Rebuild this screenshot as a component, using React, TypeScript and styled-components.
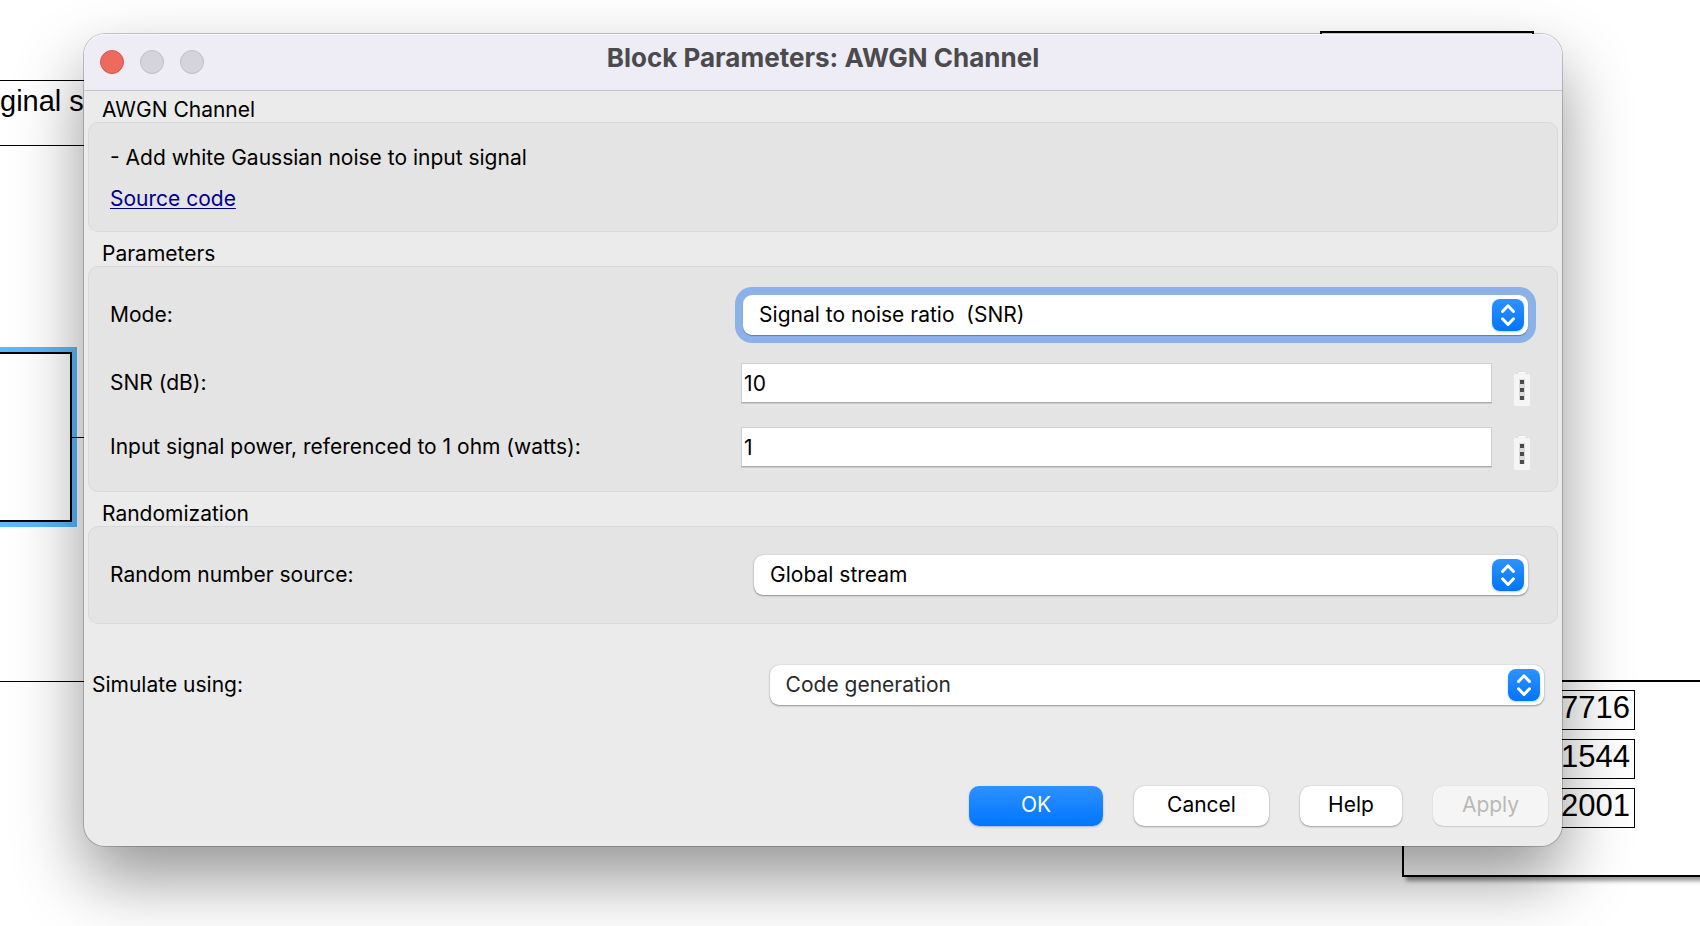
import React, { useState } from "react";
import styled, { createGlobalStyle, css } from "styled-components";

const GlobalStyle = createGlobalStyle`
  * { box-sizing: border-box; }
  body {
    margin: 0;
    background: #fff;
    color: #000;
    font-family: Inter, "Liberation Sans", sans-serif;
    font-size: 21px;
    line-height: 24px;
  }
  button, input, select { font: inherit; color: inherit; }
`;

const Page = styled.main`
  position: relative;
  min-height: 100vh;
  padding: 34px 138px 80px 84px;
  overflow: hidden;
`;

/* Block diagram behind the dialog */
const Canvas = styled.div`
  position: absolute;
  inset: 0;
  font-family: "Liberation Sans", sans-serif;
`;

const Wire = styled.div<{ $x?: number; $y: number; $length: number }>`
  position: absolute;
  left: ${(p) => p.$x ?? 0}px;
  top: ${(p) => p.$y}px;
  width: ${(p) => p.$length}px;
  height: 1px;
  background: #000;
`;

const SignalName = styled.div`
  position: absolute;
  left: 0;
  top: 84px;
  font-size: 29px;
  line-height: 34px;
  white-space: nowrap;
`;

const SelectedBlock = styled.div`
  position: absolute;
  left: -10px;
  top: 352px;
  width: 82px;
  height: 170px;
  border: 2px solid #000;
  background: #fff;
  box-shadow: 0 0 0 5px #5bb8fb;
`;

const HiddenBlock = styled.div`
  position: absolute;
  right: 166px;
  top: 31px;
  width: 214px;
  height: 80px;
  border: 2px solid #000;
`;

const DisplayBlock = styled.div`
  position: absolute;
  right: -10px;
  top: 680px;
  width: 308px;
  height: 197px;
  padding: 8px 73px 0 0;
  border: 2px solid #000;
  background: #fff;
  box-shadow: 4px 4px 4px rgba(0, 0, 0, 0.4);
  display: flex;
  flex-direction: column;
  gap: 9px;
`;

const Readout = styled.output`
  height: 40px;
  padding-right: 4px;
  border: 1px solid #000;
  font-size: 31px;
  line-height: 34px;
  text-align: right;
`;

/* Dialog */
const Dialog = styled.section`
  position: relative;
  border-radius: 21px;
  background: #ebebeb;
  box-shadow: 0 0 0 1px rgba(0, 0, 0, 0.2), 0 32px 68px rgba(0, 0, 0, 0.42);
`;

const TitleBar = styled.header`
  display: grid;
  grid-template-columns: 1fr auto 1fr;
  height: 57px;
  padding: 0 16px;
  border-bottom: 1px solid #c5c4c8;
  border-radius: 21px 21px 0 0;
  background: #eeecf5;
  box-shadow: inset 0 1px 0 #f8f7fb;
`;

const Lights = styled.div`
  display: flex;
  gap: 16px;
  padding-top: 16px;
`;

const Light = styled.button<{ $active?: boolean }>`
  width: 24px;
  height: 24px;
  padding: 0;
  border: 1px solid ${(p) => (p.$active ? "#d9564b" : "#bebdc3")};
  border-radius: 50%;
  background: ${(p) => (p.$active ? "#ed6a5e" : "#d5d4da")};
`;

const Title = styled.h1`
  margin: 0;
  padding-top: 8px;
  font-size: 26px;
  font-weight: 700;
  line-height: 32px;
  color: #4b4a4d;
  white-space: nowrap;
`;

const Body = styled.form`
  padding: 7px 4px 20px;
`;

const Group = styled.section`
  & + & { margin-top: 10px; }
`;

const GroupTitle = styled.h2`
  margin: 0;
  padding-left: 14px;
  font-size: 21px;
  font-weight: 400;
  line-height: 24px;
`;

const Panel = styled.div`
  display: flex;
  flex-direction: column;
  gap: 24px;
  padding: 28px 27px 24px 21px;
  border: 1px solid #d9d9d9;
  border-radius: 10px;
  background: #e4e4e4;
`;

const InfoPanel = styled(Panel)`
  gap: 17px;
  padding: 23px 21px 20px;
`;

const SinglePanel = styled(Panel)`
  padding-bottom: 28px;
`;

const Text = styled.p`
  margin: 0;
`;

const Link = styled.a`
  align-self: flex-start;
  color: #00008b;
  text-decoration: underline;
  text-decoration-thickness: 1px;
  text-underline-offset: 2px;
`;

const Row = styled.div<{ $spaced?: boolean }>`
  display: grid;
  grid-template-columns: 4fr 5fr;
  align-items: center;
  ${(p) => p.$spaced && css`margin-bottom: 4px;`}
`;

const SimulateRow = styled.div`
  display: grid;
  grid-template-columns: 7fr 8fr;
  align-items: center;
  margin-top: 41px;
  padding: 0 14px 0 4px;
`;

const SelectBox = styled.div<{ $inset?: number; $end?: number }>`
  position: relative;
  margin: 0 ${(p) => p.$end ?? 0}px 0 ${(p) => p.$inset ?? 0}px;
`;

const Select = styled.select<{ $ring?: boolean; $soft?: boolean }>`
  appearance: none;
  display: block;
  width: 100%;
  height: 40px;
  padding: 0 44px 0 16px;
  border: 0;
  border-radius: 9px;
  outline: 0;
  background: #fff;
  color: ${(p) => (p.$soft ? "#2a2a2a" : "#000")};
  box-shadow: ${(p) =>
    p.$ring
      ? "0 1px 1px rgba(0, 0, 0, 0.3), 0 0 0 8px #8bb1e9"
      : "0 0 1px rgba(0, 0, 0, 0.3), 0 1px 2px rgba(0, 0, 0, 0.35)"};
`;

const Stepper = styled.svg`
  position: absolute;
  top: 4px;
  right: 4px;
  width: 32px;
  height: 32px;
  border-radius: 8px;
  background: linear-gradient(#2f92ff, #0075fb);
  box-shadow: 0 1px 2px rgba(0, 110, 255, 0.3);
  pointer-events: none;
`;

const ValueField = styled.div`
  display: flex;
  gap: 22px;
  height: 40px;
`;

const TextInput = styled.input`
  flex: 1;
  min-width: 0;
  height: 40px;
  padding: 0 2px;
  border: 1px solid #cfcfcf;
  border-bottom-color: #a9a9a9;
  border-radius: 0;
  outline: 0;
  background: #fff;
  box-shadow: 0 1px 0 #cdcdcd;
`;

const MoreButton = styled.button`
  width: 16px;
  height: 35px;
  margin-top: 8px;
  padding: 0;
  border: 0;
  background: none;

  svg { display: block; }
`;

const Actions = styled.div`
  display: flex;
  flex-wrap: wrap;
  justify-content: flex-end;
  gap: 31px;
  margin-top: 81px;
  padding-right: 10px;
`;

const Button = styled.button<{ $width: number; $primary?: boolean }>`
  width: ${(p) => p.$width}px;
  height: 40px;
  padding: 0 0 2px;
  border: 0;
  border-radius: 10px;
  background: #fff;
  box-shadow: 0 0 1px rgba(0, 0, 0, 0.3), 0 1px 2px rgba(0, 0, 0, 0.3);

  ${(p) =>
    p.$primary &&
    css`
      color: #fff;
      background: linear-gradient(#2e91ff, #0075fd);
      box-shadow: 0 1px 2px rgba(0, 90, 220, 0.35);
    `}

  &:disabled {
    color: #b9b9b9;
    background: #f5f5f5;
    box-shadow: 0 0 1px rgba(0, 0, 0, 0.2), 0 1px 1px rgba(0, 0, 0, 0.12);
  }
`;

type PopupProps = {
  id: string;
  options: string[];
  inset?: number;
  end?: number;
  ring?: boolean;
  soft?: boolean;
};

function Popup({ id, options, inset, end, ring, soft }: PopupProps) {
  return (
    <SelectBox $inset={inset} $end={end}>
      <Select id={id} $ring={ring} $soft={soft}>
        {options.map((o) => (
          <option key={o}>{o}</option>
        ))}
      </Select>
      <Stepper viewBox="0 0 32 32" aria-hidden="true">
        <path
          d="M10.5 12.5 16 6.8l5.500 5.700M10.500 19.800 16 25.500l5.500-5.700"
          fill="none"
          stroke="#fff"
          strokeWidth="3"
          strokeLinecap="round"
          strokeLinejoin="round"
        />
      </Stepper>
    </SelectBox>
  );
}

function ValueRow({ id, label, initial }: { id: string; label: string; initial: string }) {
  const [value, setValue] = useState(initial);
  return (
    <Row>
      <label htmlFor={id}>{label}</label>
      <ValueField>
        <TextInput id={id} value={value} onChange={(e) => setValue(e.target.value)} />
        <MoreButton type="button" aria-label="More actions">
          <svg width="16" height="35" viewBox="0 0 16 35">
            <path d="M3 3C4 .8 5 .5 6 .5h4c1 0 2 .3 3 2.500z" fill="#fff" stroke="#cfcfcf" strokeWidth=".6" />
            <path d="M0 3h16v32H0z" fill="#f5f5f5" />
            <path d="M5 8h6v21H5z" fill="#dadada" />
            <path d="M6 9h4v4H6zM6 17h4v4H6zM6 25h4v4H6z" fill="#4a4a4a" />
          </svg>
        </MoreButton>
      </ValueField>
    </Row>
  );
}

export default function App() {
  return (
    <Page>
      <GlobalStyle />
      <Canvas>
        <Wire $y={80} $length={90} />
        <SignalName>ginal s</SignalName>
        <Wire $y={145} $length={90} />
        <SelectedBlock />
        <Wire $x={72} $y={437} $length={20} />
        <Wire $y={681} $length={90} />
        <HiddenBlock />
        <DisplayBlock>
          <Readout>7716</Readout>
          <Readout>1544</Readout>
          <Readout>2001</Readout>
        </DisplayBlock>
      </Canvas>

      <Dialog role="dialog" aria-labelledby="dialog-title">
        <TitleBar>
          <Lights>
            <Light $active aria-label="Close" />
            <Light disabled aria-label="Minimize" />
            <Light disabled aria-label="Zoom" />
          </Lights>
          <Title id="dialog-title">Block Parameters: AWGN Channel</Title>
        </TitleBar>

        <Body onSubmit={(e) => e.preventDefault()}>
          <Group>
            <GroupTitle>AWGN Channel</GroupTitle>
            <InfoPanel>
              <Text>- Add white Gaussian noise to input signal</Text>
              <Link href="#source">Source code</Link>
            </InfoPanel>
          </Group>

          <Group>
            <GroupTitle>Parameters</GroupTitle>
            <Panel>
              <Row $spaced>
                <label htmlFor="mode">Mode:</label>
                <Popup id="mode" options={["Signal to noise ratio\u00a0 (SNR)"]} inset={2} end={2} ring />
              </Row>
              <ValueRow id="snr" label="SNR (dB):" initial="10" />
              <ValueRow id="power" label="Input signal power, referenced to 1 ohm (watts):" initial="1" />
            </Panel>
          </Group>

          <Group>
            <GroupTitle>Randomization</GroupTitle>
            <SinglePanel>
              <Row>
                <label htmlFor="source">Random number source:</label>
                <Popup id="source" options={["Global stream"]} inset={13} end={2} />
              </Row>
            </SinglePanel>
          </Group>

          <SimulateRow>
            <label htmlFor="simulate">Simulate using:</label>
            <Popup id="simulate" options={["Code generation"]} soft />
          </SimulateRow>

          <Actions>
            <Button type="submit" $width={134} $primary>OK</Button>
            <Button type="button" $width={135}>Cancel</Button>
            <Button type="button" $width={102}>Help</Button>
            <Button type="button" $width={115} disabled>Apply</Button>
          </Actions>
        </Body>
      </Dialog>
    </Page>
  );
}
